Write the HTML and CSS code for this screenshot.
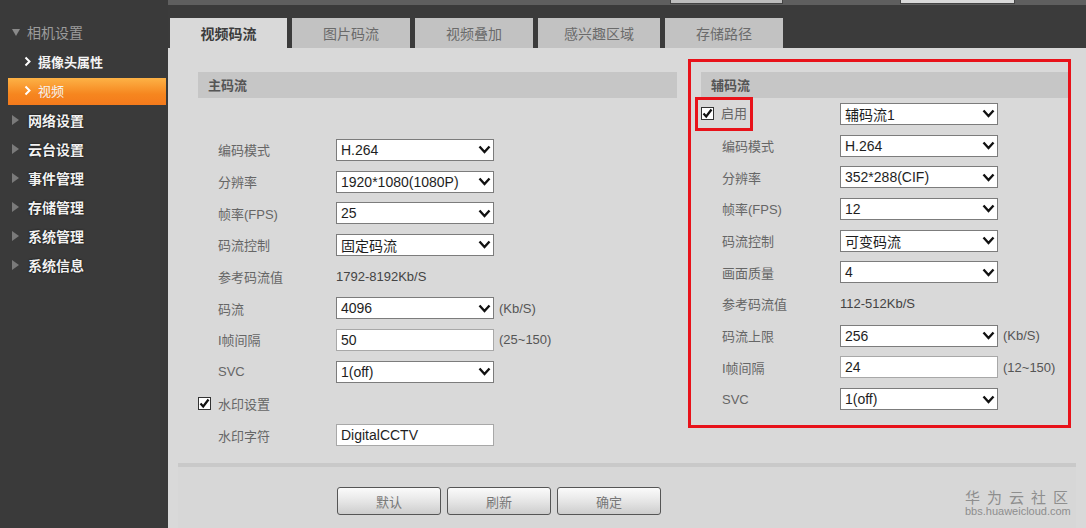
FILE: index.html
```html
<!DOCTYPE html>
<html lang="zh-CN">
<head>
<meta charset="utf-8">
<title>视频码流</title>
<link rel="stylesheet" href="styles.css">
</head>
<body>
<div class="app">
  <aside class="sidebar">
    <div class="nav-group open"><span class="tri-down"></span>相机设置</div>
    <div class="nav-sub"><svg class="chev" width="7" height="11" viewBox="0 0 7 11"><polyline points="1.5,1.5 5.5,5.5 1.5,9.5" fill="none" stroke="#fff" stroke-width="2"/></svg>摄像头属性</div>
    <div class="nav-sub active"><svg class="chev" width="7" height="11" viewBox="0 0 7 11"><polyline points="1.5,1.5 5.5,5.5 1.5,9.5" fill="none" stroke="#fff" stroke-width="2"/></svg>视频</div>
    <div class="nav-group"><span class="tri"></span>网络设置</div>
    <div class="nav-group"><span class="tri"></span>云台设置</div>
    <div class="nav-group"><span class="tri"></span>事件管理</div>
    <div class="nav-group"><span class="tri"></span>存储管理</div>
    <div class="nav-group"><span class="tri"></span>系统管理</div>
    <div class="nav-group"><span class="tri"></span>系统信息</div>
  </aside>

  <main class="main">
    <div class="topstrip"><span class="ts-box ts-a"></span><span class="ts-box ts-b"></span></div>
    <nav class="tabbar">
      <div class="tab active w117">视频码流</div>
      <div class="tab w118">图片码流</div>
      <div class="tab w118">视频叠加</div>
      <div class="tab w122">感兴趣区域</div>
      <div class="tab w118">存储路径</div>
    </nav>

    <div class="content">
      <section class="col col-main">
        <div class="sec-head">主码流</div>
        <div class="spacer"></div>
        <div class="row"><span class="label">编码模式</span><div class="select"><span>H.264</span><svg class="dd" width="13" height="9" viewBox="0 0 13 9"><polyline points="1.5,1.5 6.5,7 11.5,1.5" fill="none" stroke="#111" stroke-width="2.4"/></svg></div></div>
        <div class="row"><span class="label">分辨率</span><div class="select"><span>1920*1080(1080P)</span><svg class="dd" width="13" height="9" viewBox="0 0 13 9"><polyline points="1.5,1.5 6.5,7 11.5,1.5" fill="none" stroke="#111" stroke-width="2.4"/></svg></div></div>
        <div class="row"><span class="label">帧率(FPS)</span><div class="select"><span>25</span><svg class="dd" width="13" height="9" viewBox="0 0 13 9"><polyline points="1.5,1.5 6.5,7 11.5,1.5" fill="none" stroke="#111" stroke-width="2.4"/></svg></div></div>
        <div class="row"><span class="label">码流控制</span><div class="select"><span>固定码流</span><svg class="dd" width="13" height="9" viewBox="0 0 13 9"><polyline points="1.5,1.5 6.5,7 11.5,1.5" fill="none" stroke="#111" stroke-width="2.4"/></svg></div></div>
        <div class="row"><span class="label">参考码流值</span><span class="value">1792-8192Kb/S</span></div>
        <div class="row"><span class="label">码流</span><div class="select"><span>4096</span><svg class="dd" width="13" height="9" viewBox="0 0 13 9"><polyline points="1.5,1.5 6.5,7 11.5,1.5" fill="none" stroke="#111" stroke-width="2.4"/></svg></div><span class="unit">(Kb/S)</span></div>
        <div class="row"><span class="label">I帧间隔</span><div class="input">50</div><span class="unit">(25~150)</span></div>
        <div class="row"><span class="label">SVC</span><div class="select"><span>1(off)</span><svg class="dd" width="13" height="9" viewBox="0 0 13 9"><polyline points="1.5,1.5 6.5,7 11.5,1.5" fill="none" stroke="#111" stroke-width="2.4"/></svg></div></div>
        <div class="row row-check"><svg class="cb" width="13" height="13" viewBox="0 0 13 13"><rect x="0.5" y="0.5" width="12" height="12" fill="#fff" stroke="#333"/><polyline points="2.5,6.5 5.2,9.5 10.5,2.5" fill="none" stroke="#111" stroke-width="2.2"/></svg><span class="label">水印设置</span></div>
        <div class="row"><span class="label">水印字符</span><div class="input">DigitalCCTV</div></div>
      </section>

      <section class="col col-sub">
        <div class="sec-head">辅码流</div>
        <div class="row"><span class="enable"><svg class="cb" width="13" height="13" viewBox="0 0 13 13"><rect x="0.5" y="0.5" width="12" height="12" fill="#fff" stroke="#333"/><polyline points="2.5,6.5 5.2,9.5 10.5,2.5" fill="none" stroke="#111" stroke-width="2.2"/></svg><span class="enable-label">启用</span></span><div class="select"><span>辅码流1</span><svg class="dd" width="13" height="9" viewBox="0 0 13 9"><polyline points="1.5,1.5 6.5,7 11.5,1.5" fill="none" stroke="#111" stroke-width="2.4"/></svg></div></div>
        <div class="row"><span class="label">编码模式</span><div class="select"><span>H.264</span><svg class="dd" width="13" height="9" viewBox="0 0 13 9"><polyline points="1.5,1.5 6.5,7 11.5,1.5" fill="none" stroke="#111" stroke-width="2.4"/></svg></div></div>
        <div class="row"><span class="label">分辨率</span><div class="select"><span>352*288(CIF)</span><svg class="dd" width="13" height="9" viewBox="0 0 13 9"><polyline points="1.5,1.5 6.5,7 11.5,1.5" fill="none" stroke="#111" stroke-width="2.4"/></svg></div></div>
        <div class="row"><span class="label">帧率(FPS)</span><div class="select"><span>12</span><svg class="dd" width="13" height="9" viewBox="0 0 13 9"><polyline points="1.5,1.5 6.5,7 11.5,1.5" fill="none" stroke="#111" stroke-width="2.4"/></svg></div></div>
        <div class="row"><span class="label">码流控制</span><div class="select"><span>可变码流</span><svg class="dd" width="13" height="9" viewBox="0 0 13 9"><polyline points="1.5,1.5 6.5,7 11.5,1.5" fill="none" stroke="#111" stroke-width="2.4"/></svg></div></div>
        <div class="row"><span class="label">画面质量</span><div class="select"><span>4</span><svg class="dd" width="13" height="9" viewBox="0 0 13 9"><polyline points="1.5,1.5 6.5,7 11.5,1.5" fill="none" stroke="#111" stroke-width="2.4"/></svg></div></div>
        <div class="row"><span class="label">参考码流值</span><span class="value">112-512Kb/S</span></div>
        <div class="row"><span class="label">码流上限</span><div class="select"><span>256</span><svg class="dd" width="13" height="9" viewBox="0 0 13 9"><polyline points="1.5,1.5 6.5,7 11.5,1.5" fill="none" stroke="#111" stroke-width="2.4"/></svg></div><span class="unit">(Kb/S)</span></div>
        <div class="row"><span class="label">I帧间隔</span><div class="input">24</div><span class="unit">(12~150)</span></div>
        <div class="row"><span class="label">SVC</span><div class="select"><span>1(off)</span><svg class="dd" width="13" height="9" viewBox="0 0 13 9"><polyline points="1.5,1.5 6.5,7 11.5,1.5" fill="none" stroke="#111" stroke-width="2.4"/></svg></div></div>
      </section>
    </div>

    <footer class="footer">
      <div class="buttons">
        <button class="btn">默认</button>
        <button class="btn">刷新</button>
        <button class="btn">确定</button>
      </div>
      <div class="watermark">
        <div class="wm-cn">华为云社区</div>
        <div class="wm-en">bbs.huaweicloud.com</div>
      </div>
    </footer>
  </main>
</div>
</body>
</html>
```

FILE: styles.css
```css
* { box-sizing: border-box; }

body {
  margin: 0;
  background: #3a3a3a;
  font-family: "Liberation Sans", "Noto Sans CJK SC", sans-serif;
}

.app {
  display: flex;
  width: 1086px;
  height: 528px;
  overflow: hidden;
}

/* ---------- sidebar ---------- */
.sidebar {
  width: 168px;
  flex: none;
  background: #3a3a3a;
  padding-top: 19px;
  font-family: "Noto Sans CJK SC", sans-serif;
}

.nav-group {
  height: 29px;
  display: flex;
  align-items: center;
  padding-left: 12px;
  padding-bottom: 3px;
  font-size: 14px;
  font-weight: bold;
  color: #f2f2f2;
  text-shadow: 0 0 2px #000;
}

.nav-group.open {
  color: #9c9c9c;
  font-weight: normal;
  text-shadow: none;
}

.tri {
  width: 0;
  height: 0;
  border-left: 7px solid #7a7a7a;
  border-top: 5px solid transparent;
  border-bottom: 5px solid transparent;
  margin-right: 9px;
}

.tri-down {
  width: 0;
  height: 0;
  border-top: 7px solid #8a8a8a;
  border-left: 4.5px solid transparent;
  border-right: 4.5px solid transparent;
  margin-right: 7px;
}

.nav-sub {
  height: 29px;
  display: flex;
  align-items: center;
  padding-left: 24px;
  padding-bottom: 2px;
  font-size: 13px;
  font-weight: bold;
  color: #f4f4f4;
}

.nav-sub .chev { margin-right: 7px; }

.nav-sub.active {
  height: 27px;
  margin: 1px 2px 2px 8px;
  padding-left: 16px;
  background: linear-gradient(#fdb246, #f6861f 60%, #f47a1c);
  font-weight: normal;
}

/* ---------- main ---------- */
.main {
  flex: 1;
  display: flex;
  flex-direction: column;
  background: #d9d9d9;
  min-width: 0;
}

.topstrip {
  height: 5px;
  background: #5f5f5f;
  display: flex;
}

.ts-box {
  height: 4px;
  border: 1px solid #444;
  border-top: none;
}

.ts-a { margin-left: 502px; width: 113px; background: #bdbdbd; }
.ts-b { margin-left: 117px; width: 115px; background: #d9d9d9; }

.tabbar {
  height: 43px;
  background: #3b3b3b;
  display: flex;
  align-items: flex-end;
  gap: 5px;
  padding-left: 2px;
  font-family: "Noto Sans CJK SC", sans-serif;
}

.tab {
  height: 30px;
  display: flex;
  align-items: center;
  justify-content: center;
  background: #c2c2c2;
  color: #6a6a6a;
  font-size: 14px;
}

.tab.active {
  background: #d9d9d9;
  color: #3c3c3c;
  font-weight: bold;
}

.w117 { width: 117px; }
.w118 { width: 118px; }
.w122 { width: 122px; }

/* ---------- content ---------- */
.content {
  height: 415px;
  display: flex;
  align-items: flex-start;
  padding-left: 30px;
}

.col-main {
  width: 479px;
  margin-top: 24px;
}

.col-sub {
  width: 383px;
  margin-top: 11px;
  margin-left: 11px;
  border: 3px solid #e8121a;
  padding: 10px 0 10px 10px;
}

.sec-head {
  height: 26px;
  line-height: 26px;
  background: #c6c6c6;
  padding-left: 10px;
  font-family: "Noto Sans CJK SC", sans-serif;
  font-size: 13px;
  font-weight: bold;
  color: #555;
}

.spacer { height: 36px; }

.row {
  height: 31.7px;
  display: flex;
  align-items: center;
  padding-left: 20px;
}

.col-sub .row { padding-left: 21px; }
.col-sub .row:nth-child(2) { padding-left: 0; }

.row-check { padding-left: 0; }
.row-check .cb { margin-right: 7px; }

.label {
  width: 118px;
  flex: none;
  font-size: 13px;
  color: #666;
}

.value {
  font-size: 13px;
  color: #444;
}

.select {
  width: 158px;
  height: 22px;
  flex: none;
  background: #fff;
  border: 1px solid #7c7c7c;
  display: flex;
  align-items: center;
  justify-content: space-between;
  padding: 0 2px 0 4px;
  font-size: 14px;
  color: #1e1e1e;
}

.input {
  width: 158px;
  height: 22px;
  flex: none;
  background: #fff;
  border: 1px solid #a8a8a8;
  display: flex;
  align-items: center;
  padding-left: 4px;
  font-size: 14px;
  color: #1e1e1e;
}

.unit {
  margin-left: 5px;
  font-size: 13px;
  color: #555;
}

.enable {
  position: relative;
  width: 139px;
  flex: none;
  display: flex;
  align-items: center;
}

.enable .cb { margin-right: 7px; }

.enable-label {
  font-size: 13px;
  color: #666;
  line-height: 22px;
}

/* annotation frame drawn over the enable checkbox */
.enable::after {
  content: "";
  position: absolute;
  left: -6px;
  top: -6px;
  width: 52px;
  height: 28px;
  border: 3px solid #e8121a;
}

/* ---------- footer ---------- */
.footer {
  flex: 1;
  margin: 0 10px;
  border-top: 4px solid #c9c9c9;
  display: flex;
  align-items: flex-start;
  padding: 20px 0 0 159px;
  background: #d7d7d7;
}

.buttons {
  display: flex;
  gap: 6px;
}

.btn {
  width: 104px;
  height: 28px;
  border: 1px solid #555;
  border-radius: 3px;
  background: linear-gradient(#fbfbfb, #e6e6e6 50%, #cdcdcd);
  color: #777;
  font-family: "Noto Sans CJK SC", sans-serif;
  font-size: 13px;
  padding: 0;
}

.watermark {
  margin-left: auto;
  margin-right: 4px;
  margin-top: 1px;
  width: 107px;
  color: #8e8e8e;
}

.wm-cn {
  font-family: "Noto Sans CJK SC", sans-serif;
  font-size: 15px;
  line-height: 17px;
  letter-spacing: 7px;
  white-space: nowrap;
}

.wm-en {
  font-size: 11px;
  line-height: 13px;
  white-space: nowrap;
}
```
